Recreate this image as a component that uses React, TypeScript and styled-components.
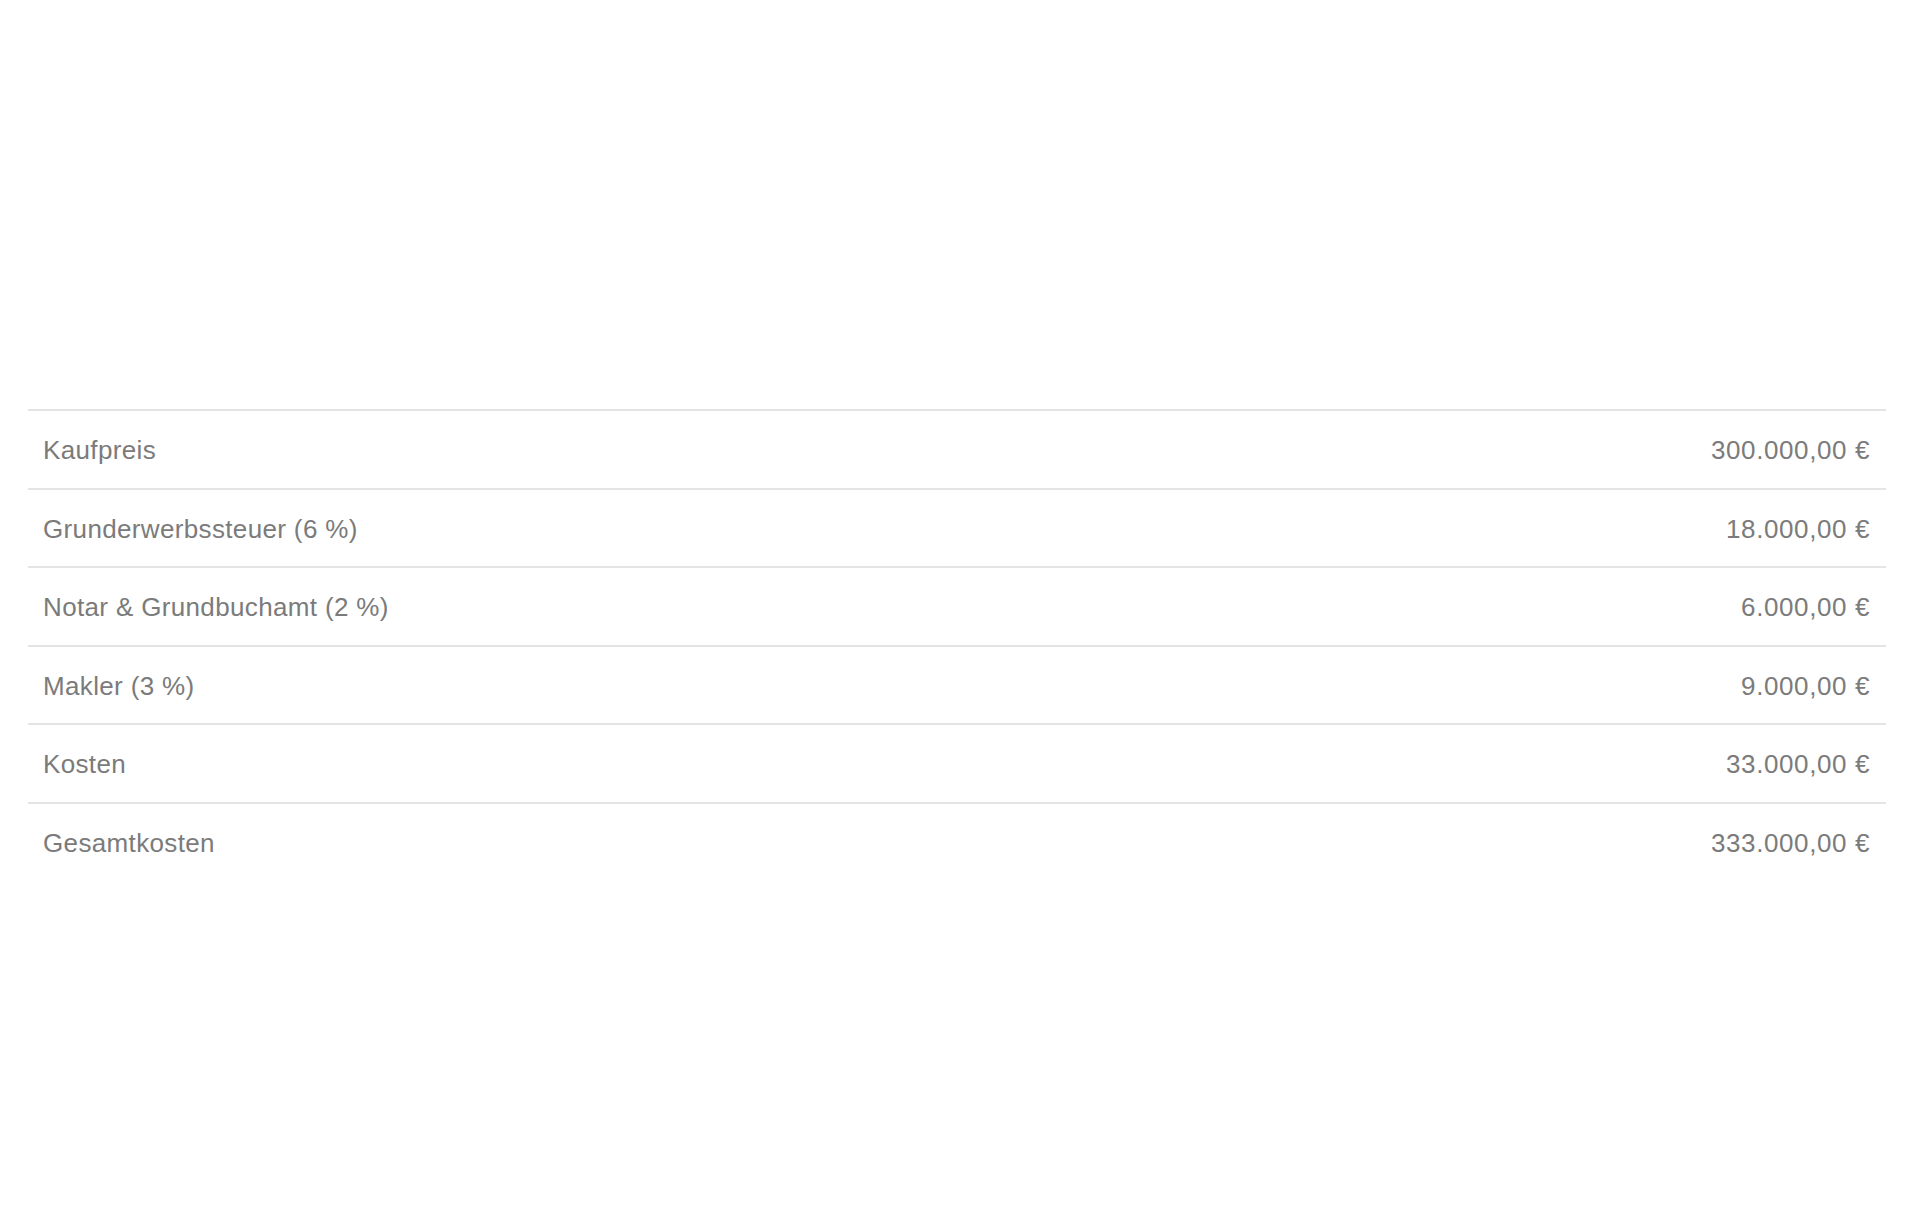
import styled, { createGlobalStyle } from 'styled-components';

const rows = [
	{ label: 'Kaufpreis', value: '300.000,00 €' },
	{ label: 'Grunderwerbssteuer (6 %)', value: '18.000,00 €' },
	{ label: 'Notar & Grundbuchamt (2 %)', value: '6.000,00 €' },
	{ label: 'Makler (3 %)', value: '9.000,00 €' },
	{ label: 'Kosten', value: '33.000,00 €' },
	{ label: 'Gesamtkosten', value: '333.000,00 €' }
];

export default function App() {
	return (
		<>
			<GlobalStyle />
			<Page>
				<CostTable>
					{rows.map(({ label, value }) => (
						<CostRow key={label}>
							<Label>{label}</Label>
							<Amount>{value}</Amount>
						</CostRow>
					))}
				</CostTable>
			</Page>
		</>
	);
}

const GlobalStyle = createGlobalStyle`
	html, body {
		margin: 0;
		padding: 0;
		background: #ffffff;
		font-family: "Liberation Sans", Arial, sans-serif;
	}
`;

const Page = styled.main`
	width: 1920px;
	height: 1229px;
	padding: 409px 34px 0 28px;
	box-sizing: border-box;
`;

const CostTable = styled.div`
	display: flex;
	flex-direction: column;
`;

const CostRow = styled.div`
	display: flex;
	justify-content: space-between;
	align-items: flex-start;
	height: 78.6px;
	box-sizing: border-box;
	border-top: 2px solid #e4e4e4;
	padding: 24px 16px 0 15px;
	font-size: 26px;
	line-height: 30px;
	color: #7b7b7b;
`;

const Label = styled.span`
	white-space: nowrap;
	letter-spacing: 0.35px;
`;

const Amount = styled.span`
	white-space: nowrap;
	text-align: right;
	letter-spacing: 0.6px;
`;
